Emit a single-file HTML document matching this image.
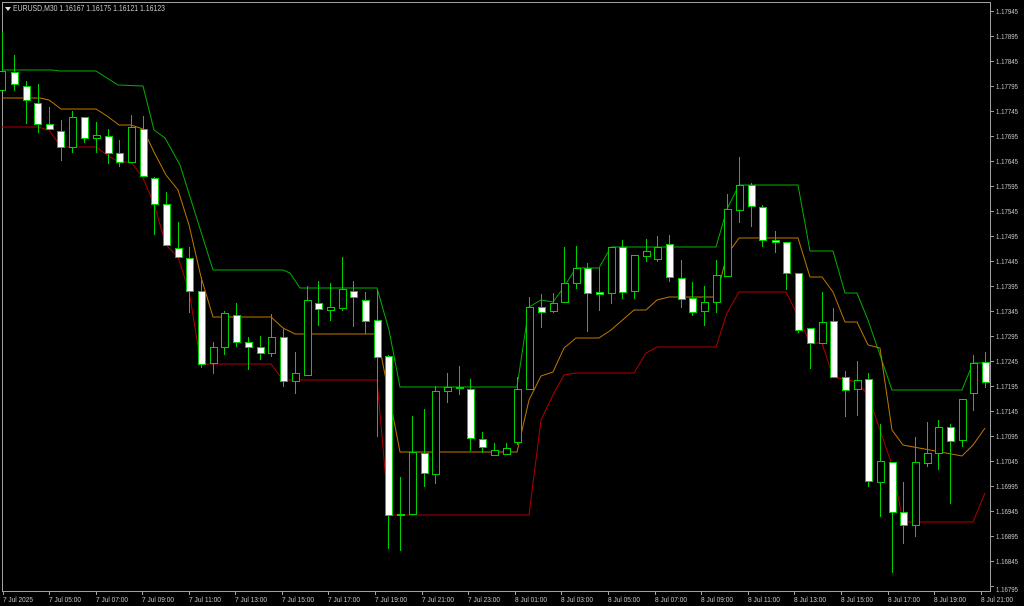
<!DOCTYPE html>
<html><head><meta charset="utf-8"><style>
html,body{margin:0;padding:0;background:#000;width:1024px;height:606px;overflow:hidden}
svg{display:block}
text{font-family:"Liberation Sans",Tahoma,sans-serif;fill:#c8c8c8}
</style></head><body>
<svg width="1024" height="606" viewBox="0 0 1024 606" xmlns="http://www.w3.org/2000/svg">
<rect width="1024" height="606" fill="#000"/>
<g shape-rendering="crispEdges">
<path d="M2.5 2.5H990.5V591.5H2.5Z" fill="none" stroke="#a0a0a0"/>
</g>
<polygon points="5,7 11,7 8,11" fill="#e0e0e0"/>
<text x="13" y="11" font-size="8.5" fill="#e8e8e8" textLength="152" lengthAdjust="spacingAndGlyphs">EURUSD,M30  1.16167 1.16175 1.16121 1.16123</text>

<g fill="none" stroke-width="1">
<polyline stroke="#00b000" points="2,70 52,70 60,71 96,71 118,85 143,86 154,130 165,138 180,165 213,270 283,270 290,273 300,288 377,288 389,330 400,387 517,387 529,307 541,300 553,302 564,287 576,268 599,268 611,247 716,247 727,209 739,185 798,185 810,251 833,251 845,293 857,293 868,320 892,390 962,390 973,363 985,363"/>
<polyline stroke="#c07800" points="2,98 40,98 49,100 61,109 96,109 107,116 119,125 131,125 143,129 154,152 166,175 178,190 189,225 201,277 213,317 271,317 283,328 295,334 377,334 389,395 400,452 517,452 529,400 541,376 553,372 564,348 576,338 599,338 611,330 634,310 646,310 657,300 669,297 716,297 727,255 739,238 798,238 810,277 822,277 833,292 845,322 857,322 868,345 880,348 892,430 903,445 962,456 973,445 985,428"/>
<polyline stroke="#b00000" points="2,127 38,127 49,130 61,147 96,147 107,155 119,162 131,162 143,178 154,204 166,245 178,257 189,291 201,364 271,364 283,380 377,380 389,515 529,515 541,420 553,395 564,375 576,373 634,373 646,353 657,347 716,347 727,313 739,292 786,292 798,316 810,343 822,343 833,377 857,382 868,395 892,465 903,522 973,522 985,493"/>
</g>

<g stroke="#00d000" stroke-width="1" shape-rendering="crispEdges">
<path d="M2.5 32V90 M14.5 55V91 M26.5 81V124 M38.5 84V133 M49.5 107V130 M61.5 120V161 M72.5 111V153 M84.5 117V143 M96.5 122V153 M108.5 129V164 M119.5 140V167 M131.5 115V162 M143.5 116V177 M154.5 177V235 M166.5 192V245 M178.5 222V257 M189.5 247V313 M201.5 277V368 M213.5 342V374 M224.5 311V355 M236.5 303V347 M248.5 337V370 M260.5 336V360 M271.5 314V357 M283.5 329V387 M295.5 352V394 M307.5 286V375 M318.5 281V326 M330.5 283V321 M342.5 257V311 M353.5 281V327 M365.5 292V334 M377.5 290V437 M388.5 355V549 M400.5 477V551 M412.5 416V514 M424.5 409V487 M435.5 386V484 M447.5 373V403 M459.5 366V395 M470.5 379V451 M482.5 432V453 M494.5 443V455 M506.5 443V454 M517.5 377V445 M529.5 297V389 M541.5 294V328 M553.5 293V313 M564.5 247V302 M576.5 246V289 M587.5 263V332 M599.5 268V311 M611.5 247V304 M622.5 240V299 M634.5 255V299 M646.5 239V262 M657.5 236V262 M669.5 235V282 M681.5 260V308 M692.5 282V316 M704.5 286V326 M716.5 260V313 M727.5 194V276 M739.5 157V223 M751.5 183V227 M762.5 205V247 M775.5 231V253 M786.5 242V290 M798.5 273V333 M810.5 328V369 M822.5 292V343 M833.5 308V378 M845.5 371V417 M857.5 361V416 M868.5 373V487 M880.5 424V517 M892.5 462V573 M903.5 482V544 M915.5 437V537 M927.5 422V467 M938.5 420V470 M950.5 424V504 M962.5 399V447 M973.5 355V411 M985.5 352V388"/>
</g>
<g stroke="#00d000" stroke-width="1" shape-rendering="crispEdges">
<g fill="#fff">
<rect x="11.5" y="72.5" width="7" height="12"/>
<rect x="23.5" y="86.5" width="7" height="14"/>
<rect x="34.5" y="103.5" width="7" height="21"/>
<rect x="46.5" y="124.5" width="7" height="5"/>
<rect x="57.5" y="131.5" width="7" height="16"/>
<rect x="81.5" y="117.5" width="7" height="21"/>
<rect x="105.5" y="136.5" width="7" height="17"/>
<rect x="116.5" y="153.5" width="7" height="9"/>
<rect x="140.5" y="129.5" width="7" height="47"/>
<rect x="151.5" y="178.5" width="7" height="26"/>
<rect x="163.5" y="204.5" width="7" height="41"/>
<rect x="175.5" y="248.5" width="7" height="9"/>
<rect x="186.5" y="258.5" width="7" height="33"/>
<rect x="198.5" y="291.5" width="7" height="73"/>
<rect x="233.5" y="315.5" width="7" height="27"/>
<rect x="245.5" y="342.5" width="7" height="5"/>
<rect x="257.5" y="347.5" width="7" height="6"/>
<rect x="280.5" y="337.5" width="7" height="44"/>
<rect x="315.5" y="303.5" width="7" height="6"/>
<rect x="350.5" y="291.5" width="7" height="6"/>
<rect x="362.5" y="300.5" width="7" height="21"/>
<rect x="374.5" y="320.5" width="7" height="37"/>
<rect x="385.5" y="356.5" width="7" height="159"/>
<rect x="421.5" y="453.5" width="7" height="20"/>
<rect x="467.5" y="389.5" width="7" height="49"/>
<rect x="479.5" y="439.5" width="7" height="8"/>
<rect x="538.5" y="307.5" width="7" height="5"/>
<rect x="584.5" y="268.5" width="7" height="25"/>
<rect x="596.5" y="292.5" width="7" height="2"/>
<rect x="619.5" y="247.5" width="7" height="45"/>
<rect x="666.5" y="244.5" width="7" height="33"/>
<rect x="678.5" y="278.5" width="7" height="21"/>
<rect x="689.5" y="298.5" width="7" height="14"/>
<rect x="748.5" y="185.5" width="7" height="21"/>
<rect x="759.5" y="207.5" width="7" height="33"/>
<rect x="772.5" y="240.5" width="7" height="2"/>
<rect x="783.5" y="242.5" width="7" height="31"/>
<rect x="795.5" y="273.5" width="7" height="57"/>
<rect x="807.5" y="328.5" width="7" height="15"/>
<rect x="830.5" y="321.5" width="7" height="56"/>
<rect x="842.5" y="377.5" width="7" height="13"/>
<rect x="865.5" y="379.5" width="7" height="102"/>
<rect x="889.5" y="462.5" width="7" height="50"/>
<rect x="900.5" y="512.5" width="7" height="13"/>
<rect x="947.5" y="427.5" width="7" height="14"/>
<rect x="982.5" y="362.5" width="7" height="20"/>
</g>
<g fill="#000">
<rect x="-1.5" y="71.5" width="7" height="19"/>
<rect x="69.5" y="117.5" width="7" height="30"/>
<rect x="93.5" y="135.5" width="7" height="3"/>
<rect x="128.5" y="127.5" width="7" height="35"/>
<rect x="210.5" y="347.5" width="7" height="16"/>
<rect x="221.5" y="313.5" width="7" height="34"/>
<rect x="268.5" y="337.5" width="7" height="16"/>
<rect x="292.5" y="373.5" width="7" height="8"/>
<rect x="304.5" y="300.5" width="7" height="75"/>
<rect x="327.5" y="307.5" width="7" height="3"/>
<rect x="339.5" y="289.5" width="7" height="19"/>
<rect x="397.5" y="514.5" width="7" height="1"/>
<rect x="409.5" y="452.5" width="7" height="62"/>
<rect x="432.5" y="391.5" width="7" height="83"/>
<rect x="444.5" y="387.5" width="7" height="4"/>
<rect x="456.5" y="387.5" width="7" height="1"/>
<rect x="491.5" y="450.5" width="7" height="5"/>
<rect x="503.5" y="448.5" width="7" height="6"/>
<rect x="514.5" y="389.5" width="7" height="53"/>
<rect x="526.5" y="307.5" width="7" height="82"/>
<rect x="550.5" y="303.5" width="7" height="8"/>
<rect x="561.5" y="283.5" width="7" height="19"/>
<rect x="573.5" y="268.5" width="7" height="15"/>
<rect x="608.5" y="247.5" width="7" height="46"/>
<rect x="631.5" y="255.5" width="7" height="36"/>
<rect x="643.5" y="251.5" width="7" height="5"/>
<rect x="654.5" y="247.5" width="7" height="12"/>
<rect x="701.5" y="302.5" width="7" height="9"/>
<rect x="713.5" y="275.5" width="7" height="27"/>
<rect x="724.5" y="209.5" width="7" height="67"/>
<rect x="736.5" y="185.5" width="7" height="25"/>
<rect x="819.5" y="322.5" width="7" height="21"/>
<rect x="854.5" y="380.5" width="7" height="9"/>
<rect x="877.5" y="461.5" width="7" height="21"/>
<rect x="912.5" y="462.5" width="7" height="63"/>
<rect x="924.5" y="453.5" width="7" height="10"/>
<rect x="935.5" y="427.5" width="7" height="26"/>
<rect x="959.5" y="399.5" width="7" height="41"/>
<rect x="970.5" y="363.5" width="7" height="30"/>
</g>
</g>

<g stroke="#a0a0a0" shape-rendering="crispEdges">
<path d="M990 11.5h4M990 36.5h4M990 61.5h4M990 86.5h4M990 111.5h4M990 136.5h4M990 161.5h4M990 186.5h4M990 211.5h4M990 236.5h4M990 261.5h4M990 286.5h4M990 311.5h4M990 336.5h4M990 361.5h4M990 386.5h4M990 411.5h4M990 436.5h4M990 461.5h4M990 486.5h4M990 511.5h4M990 536.5h4M990 561.5h4M990 586.5h4"/>
<path d="M3.5 591v4M49.5 591v4M96.5 591v4M142.5 591v4M189.5 591v4M235.5 591v4M282.5 591v4M328.5 591v4M375.5 591v4M422.5 591v4M468.5 591v4M515.5 591v4M561.5 591v4M608.5 591v4M655.5 591v4M701.5 591v4M748.5 591v4M794.5 591v4M841.5 591v4M888.5 591v4M934.5 591v4M981.5 591v4"/>
</g>
<g font-size="7.5">
<text x="996" y="14" textLength="22" lengthAdjust="spacingAndGlyphs">1.17945</text><text x="996" y="39" textLength="22" lengthAdjust="spacingAndGlyphs">1.17895</text><text x="996" y="64" textLength="22" lengthAdjust="spacingAndGlyphs">1.17845</text><text x="996" y="89" textLength="22" lengthAdjust="spacingAndGlyphs">1.17795</text><text x="996" y="114" textLength="22" lengthAdjust="spacingAndGlyphs">1.17745</text><text x="996" y="139" textLength="22" lengthAdjust="spacingAndGlyphs">1.17695</text><text x="996" y="164" textLength="22" lengthAdjust="spacingAndGlyphs">1.17645</text><text x="996" y="189" textLength="22" lengthAdjust="spacingAndGlyphs">1.17595</text><text x="996" y="214" textLength="22" lengthAdjust="spacingAndGlyphs">1.17545</text><text x="996" y="239" textLength="22" lengthAdjust="spacingAndGlyphs">1.17495</text><text x="996" y="264" textLength="22" lengthAdjust="spacingAndGlyphs">1.17445</text><text x="996" y="289" textLength="22" lengthAdjust="spacingAndGlyphs">1.17395</text><text x="996" y="314" textLength="22" lengthAdjust="spacingAndGlyphs">1.17345</text><text x="996" y="339" textLength="22" lengthAdjust="spacingAndGlyphs">1.17295</text><text x="996" y="364" textLength="22" lengthAdjust="spacingAndGlyphs">1.17245</text><text x="996" y="389" textLength="22" lengthAdjust="spacingAndGlyphs">1.17195</text><text x="996" y="414" textLength="22" lengthAdjust="spacingAndGlyphs">1.17145</text><text x="996" y="439" textLength="22" lengthAdjust="spacingAndGlyphs">1.17095</text><text x="996" y="464" textLength="22" lengthAdjust="spacingAndGlyphs">1.17045</text><text x="996" y="489" textLength="22" lengthAdjust="spacingAndGlyphs">1.16995</text><text x="996" y="514" textLength="22" lengthAdjust="spacingAndGlyphs">1.16945</text><text x="996" y="539" textLength="22" lengthAdjust="spacingAndGlyphs">1.16895</text><text x="996" y="564" textLength="22" lengthAdjust="spacingAndGlyphs">1.16845</text><text x="996" y="592" textLength="22" lengthAdjust="spacingAndGlyphs">1.16795</text>
</g>
<g font-size="7.5">
<text x="3" y="602" textLength="30" lengthAdjust="spacingAndGlyphs">7 Jul 2025</text><text x="49" y="602" textLength="32" lengthAdjust="spacingAndGlyphs">7 Jul 05:00</text><text x="96" y="602" textLength="32" lengthAdjust="spacingAndGlyphs">7 Jul 07:00</text><text x="142" y="602" textLength="32" lengthAdjust="spacingAndGlyphs">7 Jul 09:00</text><text x="189" y="602" textLength="32" lengthAdjust="spacingAndGlyphs">7 Jul 11:00</text><text x="235" y="602" textLength="32" lengthAdjust="spacingAndGlyphs">7 Jul 13:00</text><text x="282" y="602" textLength="32" lengthAdjust="spacingAndGlyphs">7 Jul 15:00</text><text x="328" y="602" textLength="32" lengthAdjust="spacingAndGlyphs">7 Jul 17:00</text><text x="375" y="602" textLength="32" lengthAdjust="spacingAndGlyphs">7 Jul 19:00</text><text x="422" y="602" textLength="32" lengthAdjust="spacingAndGlyphs">7 Jul 21:00</text><text x="468" y="602" textLength="32" lengthAdjust="spacingAndGlyphs">7 Jul 23:00</text><text x="515" y="602" textLength="32" lengthAdjust="spacingAndGlyphs">8 Jul 01:00</text><text x="561" y="602" textLength="32" lengthAdjust="spacingAndGlyphs">8 Jul 03:00</text><text x="608" y="602" textLength="32" lengthAdjust="spacingAndGlyphs">8 Jul 05:00</text><text x="655" y="602" textLength="32" lengthAdjust="spacingAndGlyphs">8 Jul 07:00</text><text x="701" y="602" textLength="32" lengthAdjust="spacingAndGlyphs">8 Jul 09:00</text><text x="748" y="602" textLength="32" lengthAdjust="spacingAndGlyphs">8 Jul 11:00</text><text x="794" y="602" textLength="32" lengthAdjust="spacingAndGlyphs">8 Jul 13:00</text><text x="841" y="602" textLength="32" lengthAdjust="spacingAndGlyphs">8 Jul 15:00</text><text x="888" y="602" textLength="32" lengthAdjust="spacingAndGlyphs">8 Jul 17:00</text><text x="934" y="602" textLength="32" lengthAdjust="spacingAndGlyphs">8 Jul 19:00</text><text x="981" y="602" textLength="32" lengthAdjust="spacingAndGlyphs">8 Jul 21:00</text>
</g>
</svg>
</body></html>
